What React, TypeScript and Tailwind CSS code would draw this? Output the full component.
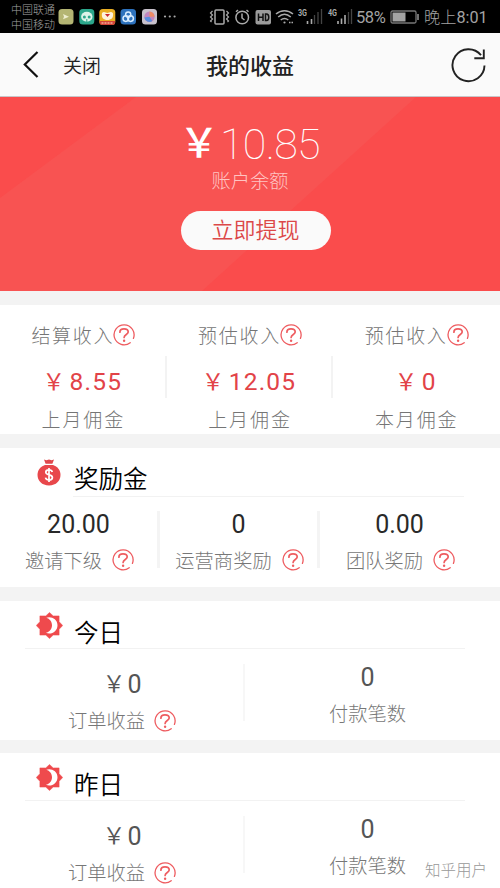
import React from "react";

function Help({ className = "" }: { className?: string }) {
  return (
    <svg className={`h-[22px] w-[22px] shrink-0 ${className}`} viewBox="0 0 22 22" fill="none" stroke="#ee5c60" strokeLinecap="round">
      <path d="M17.200 18.700A10 10 0 1 1 20.400 14.400" strokeWidth="1.300" />
      <path d="M6.900 8.200C6.900 6 8.700 4.900 11 4.900s4.200 1.100 4.200 3.200c0 2.400-4.100 2.500-4.100 5.400" strokeWidth="1.700" />
      <circle cx="11.100" cy="16.800" r="1.200" fill="#ee5c60" stroke="none" />
    </svg>
  );
}

function MoneyBag() {
  return (
    <svg className="h-[27px] w-[24px]" viewBox="0 0 24 27">
      <path d="M7 .4l2.400.8L12 .5l2.600.7L17 .4l-1.600 4.400H8.600z" fill="#e0484c" />
      <path d="M8 5.900h8c4.500 1.600 7.500 5.200 7.500 9.900 0 6-4.300 10.700-11.500 10.700S.5 21.800.5 15.800C.5 11.100 3.500 7.500 8 5.900z" fill="#e8474b" />
      <path d="M15.300 12.900c-.4-1.400-1.600-2-3.300-2-2 0-3.200.9-3.200 2.400 0 3.500 6.600 1.500 6.600 5.100 0 1.600-1.400 2.500-3.400 2.500-1.900 0-3.200-.8-3.500-2.300M12 9v14" fill="none" stroke="#fff" strokeWidth="1.700" />
    </svg>
  );
}

function SunMoon() {
  return (
    <svg className="h-[27px] w-[27px]" viewBox="0 0 27 27">
      <path d="M13.500 .5l3.700 3.400h5.900v5.800l3.600 3.800-3.600 3.800v5.800h-5.900l-3.700 3.400-3.700-3.400H3.900v-5.800L.3 13.500l3.600-3.800V3.900h5.900z" fill="#ef4a4d" stroke="#ef4a4d" strokeWidth=".5" strokeLinejoin="round" />
      <path d="M10.300 5.800C15 4 21.500 7 21.500 13.300c0 6.500-6.500 10-11.700 7.500 4-1 6.200-4 6.200-7.600 0-3.400-2.200-6.400-5.700-7.400z" fill="#fff" />
    </svg>
  );
}

function AppIcons() {
  return (
    <svg className="ml-[3px] h-[16px] w-[119px]" viewBox="0 0 119 16">
      <rect x=".5" width="15" height="15.500" rx="3.500" fill="#b4b573" />
      <path d="M5 5l6 2.700-6 2.600 1-2.600z" fill="#eeeed0" />
      <rect x="21.300" width="15" height="15.500" rx="3.500" fill="#2ca78b" />
      <ellipse cx="28.800" cy="7.800" rx="5.700" ry="5" fill="#dcf4e9" />
      <circle cx="26.400" cy="8" r="1.500" fill="#2ca78b" /><circle cx="31.200" cy="8" r="1.500" fill="#2ca78b" />
      <path d="M28.800 10v3" stroke="#2ca78b" />
      <rect x="41.300" width="16" height="16" rx="3.500" fill="#e9ae24" />
      <path d="M44 4c2-2 4 0 5.400 0s3.500-2 5.500 0c1 5-2 7-5.500 7S43 9 44 4z" fill="#fff3dc" />
      <path d="M47 5h5l-2.500 3z" fill="#c82832" />
      <path d="M41.500 12h15.600v1c0 2-1 3-3 3h-9.600c-2 0-3-1-3-3z" fill="#d34338" />
      <path d="M43.500 14h11.500" stroke="#ffe1c9" strokeDasharray="2 1" />
      <rect x="62.500" width="15.500" height="15.500" rx="3.500" fill="#2d72bd" />
      <g fill="none" stroke="#d9edff" strokeWidth="1.500"><circle cx="70.200" cy="5.600" r="2.600" /><circle cx="67.800" cy="9.600" r="2.800" /><circle cx="72.600" cy="9.600" r="2.800" /></g>
      <rect x="84" width="15" height="15.500" rx="3.500" fill="#c8c2cc" />
      <circle cx="91.500" cy="7.700" r="5.200" fill="#c085bd" />
      <path d="M91.500 7.700V2.500a5.200 5.200 0 0 1 5 5.200z" fill="#ee8b64" />
      <path d="M91.500 7.700l-5.200.8a5.200 5.200 0 0 0 8 3.500z" fill="#578ddd" />
      <circle cx="107" cy="7.500" r="1.100" fill="#aaa" /><circle cx="111.800" cy="7.500" r="1.100" fill="#aaa" /><circle cx="116.600" cy="7.500" r="1.100" fill="#aaa" />
    </svg>
  );
}

function SystemIcons() {
  return (
    <svg className="h-[24px] w-[147px]" viewBox="208 5 147 24" fill="none" stroke="#aaa">
      <rect x="215" y="10" width="9" height="14" rx="1" strokeWidth="1.500" />
      <path d="M212.500 11l-2 2 2 2-2 2 2 2-2 2 1 1M226.500 11l2 2-2 2 2 2-2 2 2 2-1 1" strokeWidth="1.200" />
      <circle cx="242.200" cy="17.500" r="6.300" strokeWidth="1.500" />
      <path d="M242 13.500v4.500l2.500 2M236 11.700l2-1.700M248.500 11.700l-2-1.700" strokeWidth="1.500" />
      <rect x="255.500" y="10" width="15.500" height="14.500" rx="2" fill="#9c9c9c" stroke="none" />
      <path d="M258.500 13.500v7.500M263 13.500v7.500M258.500 17.200h4.500M265.500 14v6.500h1c3 0 3-6.500 0-6.500z" stroke="#111" strokeWidth="1.500" />
      <path d="M276 14c5-4.500 12-4.500 17 0M278.200 17c4-3.500 8.600-3.500 12.600 0M280.700 20c2.600-2 5-2 7.600 0" strokeWidth="1.500" />
      <circle cx="284.500" cy="22.500" r="1.100" fill="#aaa" stroke="none" />
      <path d="M289 22.500h4" strokeDasharray="1.500 1" strokeWidth="1.500" />
      <path d="M307.500 24v-3M311.500 24v-5" strokeWidth="1.600" />
      <path d="M314.500 24v-9M318 24V12M321.500 24V9" stroke="#444" strokeWidth="1.300" />
      <path d="M338 24v-3M341.500 24v-5.500M345 24v-9" strokeWidth="1.600" />
      <path d="M348.500 24V12M351.500 24V9" stroke="#444" strokeWidth="1.300" />
      <g fill="#aaa" stroke="none" fontFamily="Roboto" fontSize="9" fontWeight="700">
        <text x="298" y="16" textLength="9" lengthAdjust="spacingAndGlyphs">3G</text>
        <text x="328" y="16" textLength="9" lengthAdjust="spacingAndGlyphs">4G</text>
      </g>
    </svg>
  );
}

function StatusBar() {
  return (
    <div className="flex h-[33px] items-center bg-black text-[#a3a3a3]">
      <div className="ml-[11px] w-[44px] whitespace-nowrap pt-[2px] text-[11px] font-light leading-[15px]">
        <div>中国联通</div>
        <div>中国移动</div>
      </div>
      <AppIcons />
      <div className="ml-[31px]"><SystemIcons /></div>
      <span className="ml-px w-[31px] whitespace-nowrap pt-[2px] text-[16.500px] leading-[34px] tracking-[-0.400px]">58%</span>
      <svg className="ml-[3px] h-[14px] w-[29px]" viewBox="0 0 29 14" fill="none">
        <rect x="1" y="1" width="25" height="12" rx="1.500" stroke="#777" strokeWidth="1.300" />
        <rect x="2.500" y="2.500" width="13" height="9" fill="#a3a3a3" />
        <path d="M28 4v6" stroke="#999" strokeWidth="1.500" />
      </svg>
      <span className="ml-[5px] whitespace-nowrap pt-[2px] text-[16.200px] leading-[34px]"><span className="font-light">晚上</span>8:01</span>
    </div>
  );
}

function NavBar() {
  return (
    <div className="flex h-[64px] items-center border-b border-[#c9c5c8] bg-[#fafafa]">
      <svg className="ml-[22px] h-[30px] w-[19px]" viewBox="0 0 19 30" fill="none" stroke="#111" strokeWidth="2.200">
        <path d="M15.500 2L2.800 14.500l12.700 12.500" />
      </svg>
      <span className="ml-[22px] w-[143px] pt-[4px] text-[19px] font-[350] leading-[30px] text-[#222]">关闭</span>
      <span className="w-[90px] whitespace-nowrap pt-[4px] text-[22px] font-medium leading-[30px] text-[#222]">我的收益</span>
      <svg className="ml-[154px] h-[38px] w-[38px]" viewBox="0 0 38 38" fill="none" stroke="#222" strokeWidth="1.900">
        <path d="M34.500 19.500A16 16 0 1 1 31 9.200M33.800 3.500v8.700h-9.500" />
      </svg>
    </div>
  );
}

function Balance() {
  return (
    <div className="relative flex h-[194px] flex-col items-center bg-[#fa4c4c]">
      <svg className="absolute inset-0 h-[194px] w-[500px]" viewBox="0 0 500 194">
        <path d="M136 0H416L202 194H0V101z" fill="#f85352" />
      </svg>
      <div className="relative mt-[24px] flex h-[46px] w-[134px] items-center text-white">
        <span className="-ml-[4px] w-[41px] text-[40px] font-medium leading-[46px]">￥</span>
        <span className="ml-px whitespace-nowrap text-[43px] font-thin leading-[46px] tracking-[-0.700px]">10.85</span>
      </div>
      <div className="relative mt-[2px] text-[19.300px] font-light leading-[26px] text-[#ffc4c2]">账户余额</div>
      <button className="relative ml-[11px] mt-[16px] h-[39px] w-[150px] rounded-full bg-[#fafafa] text-[22px] font-[350] leading-[37px] text-[#dc4848]">立即提现</button>
    </div>
  );
}

function Income({ title, value, label }: { title: string; value: string; label: string }) {
  return (
    <div className="flex h-full flex-1 flex-col items-center whitespace-nowrap text-[19px] text-[#757575]">
      <div className="mt-[17px] flex h-[26px] items-center font-light tracking-[1.700px]"><span className="pt-[4px]">{title}</span><Help className="-ml-px" /></div>
      <div className="mt-[19px] flex h-[30px] text-[24.500px] leading-[30px] tracking-[1.200px] text-[#e24348]">
        <span className="-ml-[2px] w-[27px] text-[22.500px] font-normal">￥</span>{value}
      </div>
      <div className="mt-[11px] h-[26px] font-light leading-[26px] tracking-[1.900px]">{label}</div>
    </div>
  );
}

function Reward({ value, label, className = "" }: { value: string; label: string; className?: string }) {
  return (
    <div className={`flex w-[160px] flex-col items-center whitespace-nowrap ${className}`}>
      <div className="-ml-[3px] h-[30px] pt-px text-[25px] leading-[30px] text-[#292929]">{value}</div>
      <div className="-ml-px mt-[8px] flex h-[26px] items-center text-[19.300px] font-light leading-[26px] text-[#777]"><span className="pt-[3px]">{label}</span><Help className="ml-[10px]" /></div>
    </div>
  );
}

function DaySection({ title }: { title: string }) {
  return (
    <section className="h-[139px] shrink-0 bg-white">
      <div className="mx-[25px] flex h-[48px] w-[440px] border-b border-[#f2f2f2]">
        <div className="ml-[11px] mt-[11px]"><SunMoon /></div>
        <span className="ml-[11px] mt-[16px] text-[24.500px] font-[350] leading-[34px] text-black">{title}</span>
      </div>
      <div className="flex h-[91px] w-[490px] whitespace-nowrap text-[19.300px] font-light text-[#777]">
        <div className="flex w-[243px] flex-col items-center">
          <div className="ml-[2px] mt-[21px] flex h-[30px] text-[25px] font-normal leading-[30px] text-[#555]"><span className="-ml-px w-[25px] text-[23px] font-[350]">￥</span>0</div>
          <div className="ml-px mt-[8px] flex h-[26px] items-center"><span className="pt-[3px]">订单收益</span><Help className="ml-[9px]" /></div>
        </div>
        <div className="mt-[15px] h-[57px] w-[2px] bg-[#f7f7f7]" />
        <div className="flex w-[245px] flex-col items-center">
          <div className="mt-[14px] h-[30px] text-[25px] font-normal leading-[30px] text-[#555]">0</div>
          <div className="mt-[8px] h-[26px] leading-[27px]">付款笔数</div>
        </div>
      </div>
    </section>
  );
}

export default function App() {
  return (
    <main className="relative h-[888px] w-[500px] overflow-hidden bg-[#f3f3f3] font-['Roboto','Noto_Sans_CJK_SC',sans-serif]">
      <StatusBar />
      <NavBar />
      <Balance />
      <section className="mt-[14px] flex h-[129px] bg-white">
        <Income title="结算收入" value="8.55" label="上月佣金" />
        <div className="-ml-[2px] mt-[51px] h-[42px] w-[2px] bg-[#f3f3f3]" />
        <Income title="预估收入" value="12.05" label="上月佣金" />
        <div className="-ml-[2px] mt-[51px] h-[42px] w-[2px] bg-[#f3f3f3]" />
        <Income title="预估收入" value="0" label="本月佣金" />
      </section>
      <section className="mt-[14px] h-[139px] bg-white">
        <div className="flex h-[49px]">
          <div className="ml-[37px] mt-[11px]"><MoneyBag /></div>
          <div className="ml-[12px] w-[391px] border-b border-[#f2f2f2] pt-[16px] text-[24.500px] font-[350] leading-[32px] text-black"><span className="ml-px">奖励金</span></div>
        </div>
        <div className="flex h-[90px] w-[481px] pt-[12px]">
          <Reward value="20.00" label="邀请下级" />
          <div className="-ml-[3px] mt-[2px] h-[57px] w-[3px] bg-[#f4f4f4]" />
          <Reward value="0" label="运营商奖励" />
          <div className="-ml-[3px] mt-[2px] h-[57px] w-[3px] bg-[#f4f4f4]" />
          <Reward value="0.00" label="团队奖励" className="ml-px" />
        </div>
      </section>
      <div className="mt-[14px] flex flex-col gap-[13px]">
        <DaySection title="今日" />
        <DaySection title="昨日" />
      </div>
      <div className="absolute left-[425px] top-[861px] whitespace-nowrap text-[15.500px] font-light leading-[20px] text-[#999]">知乎用户</div>
    </main>
  );
}
